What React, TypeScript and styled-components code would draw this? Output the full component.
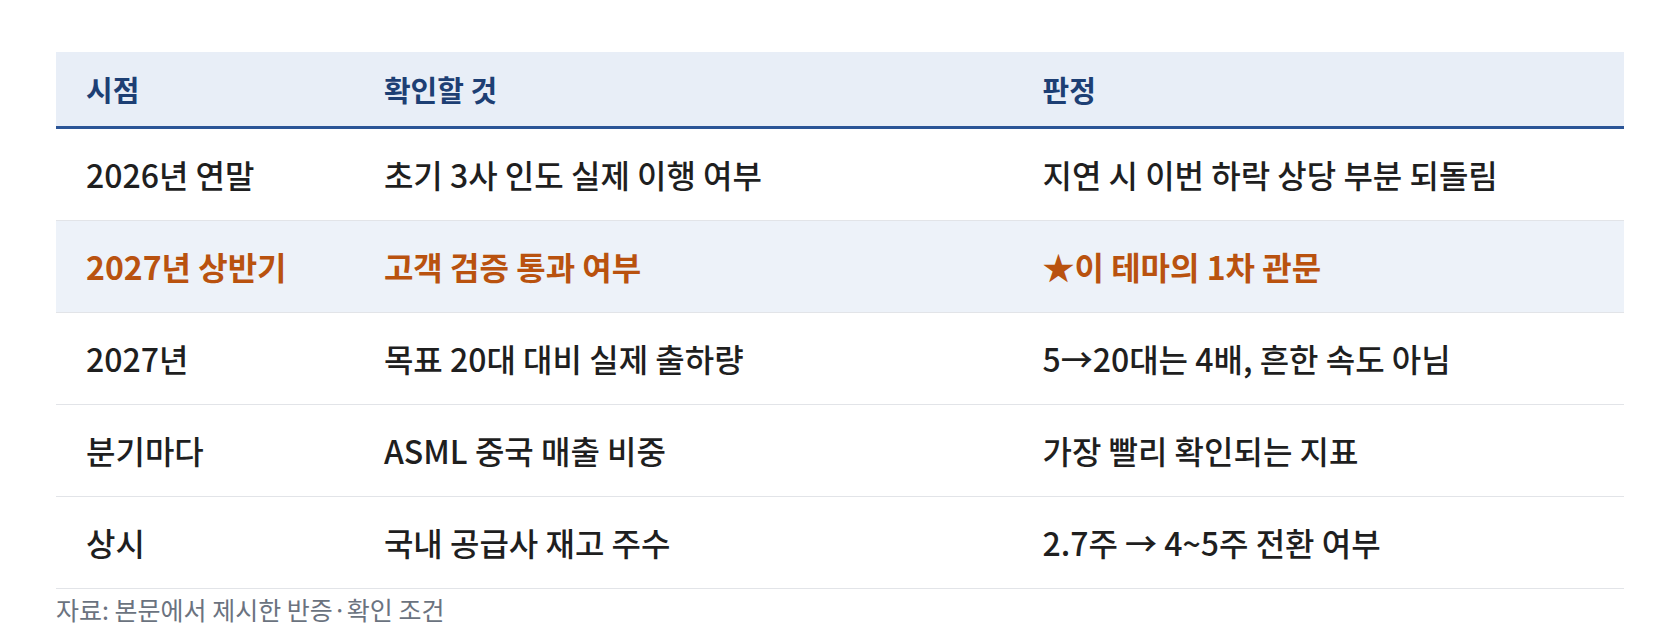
import React from "react";
import styled, { createGlobalStyle } from "styled-components";

const GlobalStyle = createGlobalStyle`
  html, body {
    margin: 0;
    padding: 0;
    background: #ffffff;
  }
  body {
    font-family: "Noto Sans CJK KR", "Noto Sans", sans-serif;
    color: #1f1f1f;
  }
`;

const Wrapper = styled.div`
  padding: 52px 56px 0 56px;
`;

const Table = styled.table`
  width: 100%;
  border-collapse: collapse;
  table-layout: fixed;
`;

const HeadRow = styled.tr`
  background: #e8eef7;
  border-bottom: 3px solid #2b5597;
`;

const HeadCell = styled.th<{ $w: string }>`
  box-sizing: border-box;
  width: ${(p) => p.$w};
  text-align: left;
  padding: 17px 30px;
  font-size: 29px;
  line-height: 40px;
  font-weight: 700;
  color: #1d3f74;
`;

const Row = styled.tr<{ $hl?: boolean }>`
  background: ${(p) => (p.$hl ? "#edf2f9" : "#ffffff")};
  border-bottom: 1px solid #e2e4e8;
`;

const Cell = styled.td<{ $hl?: boolean }>`
  box-sizing: border-box;
  padding: 26px 30px;
  font-size: 32px;
  line-height: 39px;
  font-weight: ${(p) => (p.$hl ? 700 : 500)};
  color: ${(p) => (p.$hl ? "#b9520f" : "#1f1f1f")};
  white-space: nowrap;
`;

const Caption = styled.div`
  margin-top: 3px;
  font-size: 25px;
  line-height: 34px;
  color: #6b7380;
`;

const rows = [
  { when: "2026년 연말", what: "초기 3사 인도 실제 이행 여부", verdict: "지연 시 이번 하락 상당 부분 되돌림" },
  { when: "2027년 상반기", what: "고객 검증 통과 여부", verdict: "★이 테마의 1차 관문", hl: true },
  { when: "2027년", what: "목표 20대 대비 실제 출하량", verdict: "5→20대는 4배, 흔한 속도 아님" },
  { when: "분기마다", what: "ASML 중국 매출 비중", verdict: "가장 빨리 확인되는 지표" },
  { when: "상시", what: "국내 공급사 재고 주수", verdict: "2.7주 → 4~5주 전환 여부" },
];

export default function App() {
  return (
    <Wrapper>
      <GlobalStyle />
      <Table>
        <thead>
          <HeadRow>
            <HeadCell $w="19%">시점</HeadCell>
            <HeadCell $w="42%">확인할 것</HeadCell>
            <HeadCell $w="39%">판정</HeadCell>
          </HeadRow>
        </thead>
        <tbody>
          {rows.map((r) => (
            <Row key={r.when} $hl={r.hl}>
              <Cell $hl={r.hl}>{r.when}</Cell>
              <Cell $hl={r.hl}>{r.what}</Cell>
              <Cell $hl={r.hl}>{r.verdict}</Cell>
            </Row>
          ))}
        </tbody>
      </Table>
      <Caption>자료: 본문에서 제시한 반증·확인 조건</Caption>
    </Wrapper>
  );
}
